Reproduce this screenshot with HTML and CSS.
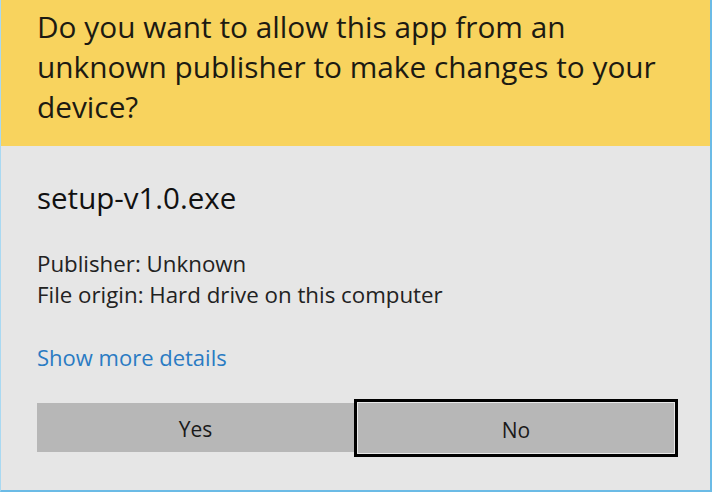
FILE: index.html
```html
<!DOCTYPE html>
<html>
<head>
<meta charset="utf-8">
<link rel="stylesheet" href="styles.css">
</head>
<body>
<div class="dialog">
  <div class="header">
    <p class="question">Do you want to allow this app from an unknown publisher to make changes to your device?</p>
  </div>
  <div class="content">
    <div class="filename">setup-v1.0.exe</div>
    <div class="info">
      <div>Publisher: Unknown</div>
      <div>File origin: Hard drive on this computer</div>
    </div>
    <a class="more" href="#">Show more details</a>
    <div class="buttons">
      <button class="btn yes">Yes</button>
      <button class="btn no">No</button>
    </div>
  </div>
</div>
</body>
</html>
```
FILE: styles.css
```css
html, body {
  margin: 0;
  padding: 0;
}
.dialog {
  width: 712px;
  height: 492px;
  box-sizing: border-box;
  background: #e6e6e6;
  border-left: 1px solid #a9d9f2;
  border-right: 2px solid #6bbbe6;
  border-bottom: 2px solid #6bbbe6;
  font-family: "Open Sans", "Noto Sans", sans-serif;
  color: #111;
  display: flex;
  flex-direction: column;
}
.header {
  background: #f8d35e;
  height: 146px;
  box-sizing: border-box;
  padding: 7px 0 0 36px;
}
.question {
  margin: 0;
  max-width: 634px;
  font-size: 29.8px;
  line-height: 40px;
  color: #1c1a12;
}
.content {
  padding: 36px 0 0 36px;
  display: flex;
  flex-direction: column;
}
.filename {
  font-size: 29.5px;
  line-height: 32px;
  color: #111;
}
.info {
  margin-top: 34px;
  font-size: 22.3px;
  line-height: 31px;
  color: #222;
}
.more {
  margin-top: 32px;
  font-size: 22px;
  line-height: 31px;
  color: #2a7bc3;
  text-decoration: none;
  align-self: flex-start;
}
.buttons {
  margin-top: 26px;
  display: flex;
  align-items: flex-start;
  height: 58px;
}
.btn {
  font-family: "Open Sans", "Noto Sans", sans-serif;
  font-size: 21px;
  color: #1a1a1a;
  background: #b7b7b7;
  border: none;
  padding: 3px 0 0 0;
  margin: 0;
  flex-shrink: 0;
  box-sizing: border-box;
}
.yes {
  width: 317px;
  height: 49px;
  margin-top: 4px;
}
.no {
  width: 324px;
  height: 58px;
  border: 3px solid #000;
  box-shadow: inset 0 0 0 1px #e8e8e8;
}
```
